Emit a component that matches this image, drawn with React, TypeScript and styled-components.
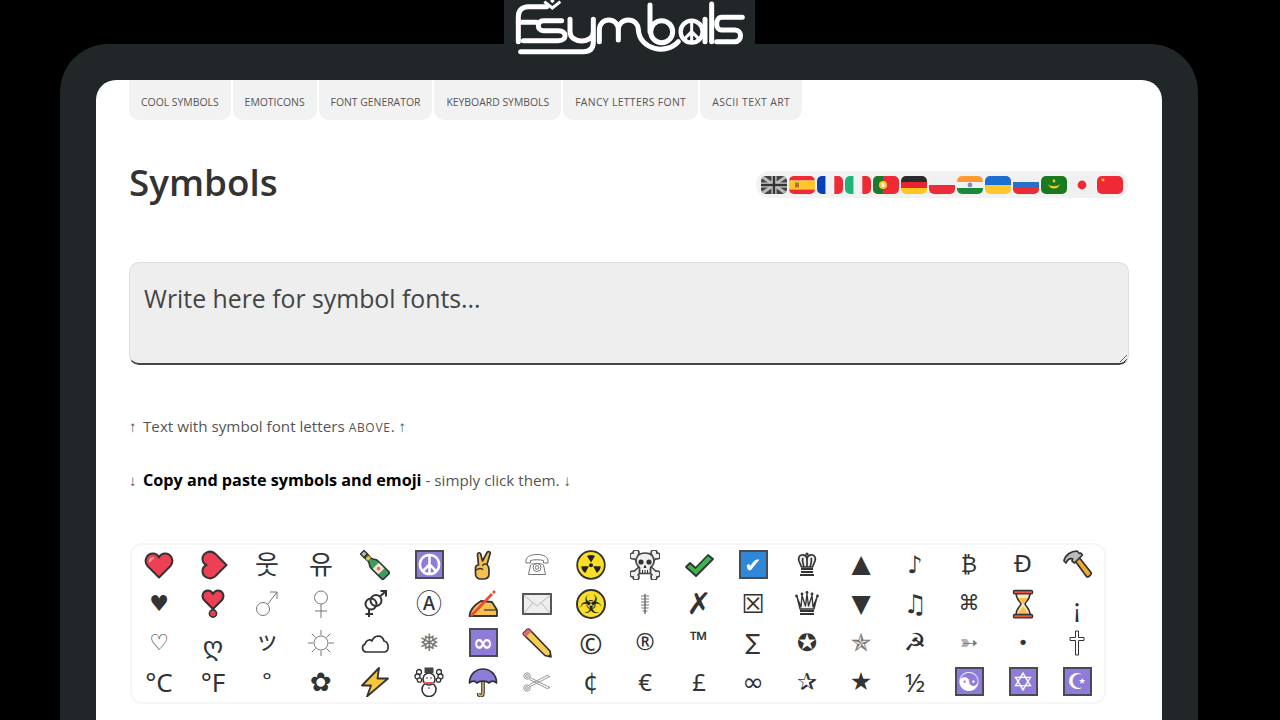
import React from 'react'
import styled, { createGlobalStyle } from 'styled-components'

const GlobalStyle = createGlobalStyle`
  html, body {
    margin: 0;
    height: 720px;
    overflow: hidden;
    background: #000;
  }
  * { box-sizing: border-box; }
`

const Page = styled.div`
  width: 1280px;
  font-family: 'Open Sans', 'Noto Sans', sans-serif;
  color: #444;
`
const Header = styled.header`
  height: 44px;
  display: flex;
  padding-left: 504px;
`
const LogoBox = styled.a`
  position: relative;
  display: block;
  width: 251px;
  height: 44px;
  background: #212628;
`
const LogoSvg = styled.svg`
  position: absolute;
  left: -14px;
  top: 0;
  width: 280px;
  height: 70px;
`
const Frame = styled.div`
  width: 1138px;
  height: 676px;
  margin-left: 60px;
  padding: 36px 36px 0;
  background: #212628;
  border-radius: 48px 48px 0 0;
`
const Card = styled.main`
  height: 640px;
  padding: 0 33px;
  background: #fff;
  border-radius: 20px 20px 0 0;
`
const Nav = styled.nav`
  display: flex;
  gap: 2px;
`
const Tab = styled.a<{ $track?: number }>`
  display: flex;
  align-items: center;
  height: 40px;
  padding: 3px 12px 0;
  background: #f2f2f2;
  border-radius: 0 0 10px 10px;
  font-size: 10.4px;
  letter-spacing: ${p => p.$track || 0}px;
  color: #555;
  text-transform: uppercase;
  white-space: nowrap;
`
const TitleRow = styled.div`
  display: flex;
  align-items: center;
  justify-content: space-between;
  margin-top: 37px;
  height: 52px;
`
const Title = styled.h1`
  margin: -2px 0 0;
  font-size: 36.8px;
  font-weight: 600;
  color: #333;
`
const FlagBar = styled.div`
  display: flex;
  gap: 2px;
  height: 27px;
  align-items: center;
  padding: 0 5px;
  margin: 3px 1px 0 0;
  background: #f2f2f2;
  border-radius: 13px;
`
const FlagSvg = styled.svg`
  display: block;
  width: 26px;
  height: 18px;
  border-radius: 5px;
`
const Input = styled.textarea`
  display: block;
  width: 1000px;
  height: 103px;
  margin-top: 53px;
  padding: 17px 14px;
  background: #eee;
  border: 1px solid #ddd;
  border-bottom: 2px solid #444;
  border-radius: 10px;
  font-family: inherit;
  font-size: 24.8px;
  line-height: 36px;
  outline: none;
  &::placeholder { color: #444; opacity: 1; }
`
const Note = styled.p`
  margin: 0;
  height: 22px;
  font-size: 15.2px;
  line-height: 22px;
  color: #555;
  white-space: nowrap;
  & + & { margin-top: 32px; }
  b { color: #000; font-size: 16.2px; font-weight: 700; }
`
const Notes = styled.div`
  margin-top: 50px;
`
const Arrow = styled.span`
  display: inline-block;
  width: 14px;
`
const Small = styled.span`
  font-variant: small-caps;
  font-size: 1.1em;
  letter-spacing: 0.7px;
`
const Grid = styled.div`
  display: grid;
  grid-template-columns: repeat(18, 54px);
  grid-auto-rows: 39px;
  width: 976px;
  margin-top: 52px;
  margin-left: 1px;
  padding-bottom: 1px;
  border: 2px solid #f6f6f6;
  border-radius: 12px;
`
const Cell = styled.span`
  display: flex;
  align-items: center;
  justify-content: center;
  overflow: hidden;
`
const Glyph = styled.span<{ $size: number; $color?: string; $lift?: number; $font?: string }>`
  display: block;
  font-family: ${p => p.$font || `'DejaVu Sans', 'Noto Sans CJK KR', 'Noto Sans CJK JP', sans-serif`};
  font-size: ${p => p.$size}px;
  line-height: 1;
  color: ${p => p.$color || '#333'};
  transform: translateY(${p => p.$lift || 0}px);
`
const Tile = styled.span<{ $bg?: string; $size?: number }>`
  display: flex;
  align-items: center;
  justify-content: center;
  width: 29px;
  height: 29px;
  background: ${p => p.$bg || '#8e7cd8'};
  border: 2px solid #4a4a55;
  color: #fff;
  font-family: 'DejaVu Sans', sans-serif;
  font-size: ${p => p.$size || 20}px;
  font-weight: 700;
  line-height: 1;
`
const Hazard = styled.span<{ $size: number }>`
  display: flex;
  align-items: center;
  justify-content: center;
  width: 30px;
  height: 30px;
  background: #fbdf27;
  border: 2px solid #333;
  border-radius: 50%;
  color: #222;
  font-family: 'DejaVu Sans', sans-serif;
  font-size: ${p => p.$size}px;
  line-height: 1;
`
const IconSvg = styled.svg`
  display: block;
  width: 30px;
  height: 30px;
`
const PeaceSvg = styled.svg`
  display: block;
  width: 23px;
  height: 23px;
`

const heartPath = 'M15 27.5 L3.5 16 C-0.5 11 2.5 3.5 9 3.5 C12 3.5 14 5.3 15 7.5 C16 5.3 18 3.5 21 3.5 C27.5 3.5 30.5 11 26.5 16 Z'
const ink = '#333'

const Icon = ({ children }: { children: React.ReactNode }) => <IconSvg viewBox='0 0 30 30'>{children}</IconSvg>

const Heart = () => (
  <Icon>
    <path d={heartPath} fill='#ee4054' stroke={ink} strokeWidth='2' strokeLinejoin='round' />
    <path d='M6 12 C6 9 8 8 10 8' fill='none' stroke='#f6a5a0' strokeWidth='2' />
  </Icon>
)
const HeartSide = () => (
  <Icon>
    <g transform='rotate(-90 15 15) translate(0 1)'>
      <path d={heartPath} fill='#ee4054' stroke={ink} strokeWidth='2' strokeLinejoin='round' />
    </g>
  </Icon>
)
const HeartDrop = () => (
  <Icon>
    <path d='M15 20 L6 11 C3 7 5 1.5 10 1.5 C12.5 1.5 14 3 15 5 C16 3 17.5 1.5 20 1.5 C25 1.5 27 7 24 11 Z' fill='#ee4054' stroke={ink} strokeWidth='2' strokeLinejoin='round' />
    <circle cx='15' cy='24.5' r='3.6' fill='#ee4054' stroke={ink} strokeWidth='1.6' />
  </Icon>
)
const Champagne = () => (
  <Icon>
    <g transform='rotate(-45 15 15)'>
      <rect x='12.5' y='-3' width='5' height='5' fill='#bbb' stroke={ink} strokeWidth='1.4' />
      <path d='M12.8 2 H17.2 V8 C17.2 10 20 11 20 14 V31 H10 V14 C10 11 12.8 10 12.8 8 Z' fill='#3e9d5c' stroke={ink} strokeWidth='1.6' strokeLinejoin='round' />
      <rect x='10.8' y='16' width='8.4' height='8' fill='#f5e6d8' />
      <circle cx='15' cy='20' r='1.8' fill='#e66' />
      <rect x='12.8' y='4' width='4.4' height='3' fill='#f0c040' />
    </g>
  </Icon>
)
const Victory = () => (
  <Icon>
    <path d='M10.5 15 L9.5 5 C9.3 2.5 12 2 12.7 4 L14.5 11 L19 2.5 C20.3 0.6 23 2 22 4 L19 14.5 C20.5 16 21 18 21 20 V24 C21 27.5 19 29 15 29 H13 C9.5 29 7.5 27 7.5 24 V18 C7.5 16 9 15 10.5 15 Z' fill='#f5c04d' stroke={ink} strokeWidth='1.7' strokeLinejoin='round' />
    <path d='M8 20 C11 18 14 18 15 20 M19 14.5 C16.5 13.5 15 14 14.5 16' fill='none' stroke={ink} strokeWidth='1.3' />
  </Icon>
)
const Phone = () => (
  <Icon>
    <g fill='none' stroke='#777' strokeWidth='1'>
      <path d='M4 13 C3 7 8 4.5 15 4.5 C22 4.5 27 7 26 13 H21.5 V10.5 C19 9.5 11 9.5 8.5 10.5 V13 Z' />
      <path d='M6.5 24.5 L8.5 15 C9.5 13 20.5 13 21.5 15 L23.5 24.5 Z' />
      <circle cx='15' cy='17.5' r='4' />
      <circle cx='15' cy='17.5' r='1.8' />
    </g>
  </Icon>
)
const Radiation = () => (
  <Icon>
    <circle cx='15' cy='15' r='13.8' fill='#fbdf27' stroke={ink} strokeWidth='1.8' />
    <path d='M15 12.5 L11 6 C13.5 4.8 16.5 4.8 19 6 Z M17.2 16.3 L24.7 16.2 C24.6 19 23 21.5 20.7 23 Z M12.8 16.3 L9.3 23 C7 21.5 5.4 19 5.3 16.2 Z' fill='#222' />
    <circle cx='15' cy='15.2' r='2' fill='#222' />
  </Icon>
)
const boneLines = 'M4.5 5.5 L25.5 24.5 M25.5 5.5 L4.5 24.5'
const boneEnds = [
  [3, 6], [6, 3], [27, 6], [24, 3], [3, 24], [6, 27], [27, 24], [24, 27]
]
const Skull = () => (
  <Icon>
    {boneEnds.map(([cx, cy], i) => <circle key={i} cx={cx} cy={cy} r='3' fill='#efefef' stroke='#444' strokeWidth='1.7' />)}
    <path d={boneLines} stroke='#444' strokeWidth='7' />
    {boneEnds.map(([cx, cy], i) => <circle key={i} cx={cx} cy={cy} r='2.2' fill='#efefef' />)}
    <path d={boneLines} stroke='#efefef' strokeWidth='3.8' />
    <path d='M15 3 C21.5 3 24 7 24 11.5 C24 15 21.5 16 20.5 18 V23.5 H9.5 V18 C8.5 16 6 15 6 11.5 C6 7 8.5 3 15 3 Z' fill='#efefef' stroke='#444' strokeWidth='1.7' strokeLinejoin='round' />
    <circle cx='11' cy='12' r='2.6' fill='#333' />
    <circle cx='19' cy='12' r='2.6' fill='#333' />
    <path d='M14 17.5 L15 15.5 L16 17.5 Z M12.5 20 V23 M15 20 V23 M17.5 20 V23' fill='#333' stroke='#333' strokeWidth='1' />
  </Icon>
)
const Check = () => (
  <Icon>
    <path d='M2 17 L6 13 L11.5 18 L24 5 L29 9 L12 26 Z' fill='#3cb54a' stroke={ink} strokeWidth='1.8' strokeLinejoin='round' />
  </Icon>
)
const King = () => (
  <Icon>
    <path d='M15 8 C13 3 5 4 7 11 L9.5 17 H20.5 L23 11 C25 4 17 3 15 8 Z' fill='#eee' stroke={ink} strokeWidth='1.7' />
    <path d='M15 8 V17 M11 8 C10 10 11 14 12 17 M19 8 C20 10 19 14 18 17' fill='none' stroke={ink} strokeWidth='1.7' />
    <circle cx='15' cy='4' r='1.6' fill={ink} />
    <path d='M9 19 H21 M9 22 H21 M8 25 H22' stroke={ink} strokeWidth='2' />
  </Icon>
)
const Queen = () => (
  <Icon>
    <path d='M5 8 L9 18 L10 6.5 L13.5 17 L15 5 L16.5 17 L20 6.5 L21 18 L25 8 L22 20 H8 Z' fill='#eee' stroke={ink} strokeWidth='1.3' strokeLinejoin='round' />
    <g fill={ink}>
      <circle cx='4.5' cy='7' r='1.4' /><circle cx='10' cy='5' r='1.4' /><circle cx='15' cy='3.5' r='1.4' />
      <circle cx='20' cy='5' r='1.4' /><circle cx='25.5' cy='7' r='1.4' />
    </g>
    <path d='M8 22 H22 M8 25 H22' stroke={ink} strokeWidth='2' />
  </Icon>
)
const Hammer = () => (
  <Icon>
    <path d='M12 9.5 L16 6 L29 22.5 C30 24 26.5 28 24.5 26.5 Z' fill='#eeaa33' stroke={ink} strokeWidth='1.7' strokeLinejoin='round' />
    <path d='M2 11 C3 5 9 1 15 1 L17.5 3.5 L18.8 3 L20.4 5 L12.5 13 L10 11 L10.5 8.8 C8 8.2 5.5 9.5 4 13 Z' fill='#bbb' stroke={ink} strokeWidth='1.7' strokeLinejoin='round' />
  </Icon>
)
const WritingHand = () => (
  <Icon>
    <path d='M1.5 27 C2 20 8 15 13 12 L24 13 L29 21 V27 Z' fill='#f5c04d' stroke={ink} strokeWidth='1.8' strokeLinejoin='round' />
    <path d='M3 27 L24 5 M25 4 L27 2' fill='none' stroke='#e64a3c' strokeWidth='2.6' />
    <path d='M16 21 H28' stroke={ink} strokeWidth='1.2' />
  </Icon>
)
const Envelope = () => (
  <Icon>
    <rect x='1' y='5' width='28' height='20' fill='#eee' stroke='#444' strokeWidth='1.8' />
    <path d='M1.5 6 L15 17 L28.5 6 M2 24.5 L11 13.5 M28 24.5 L19 13.5' fill='none' stroke='#bbb' strokeWidth='1' />
  </Icon>
)
const Pencil = () => (
  <Icon>
    <path d='M1.5 5 L5 1.5 C6 1 7 1 8 2 L28 23 L29 29 L23 27.5 L2 7 C1.3 6.5 1.2 5.6 1.5 5 Z' fill='#f7cc55' stroke={ink} strokeWidth='1.7' strokeLinejoin='round' />
    <path d='M1.5 5 L5 1.5 C6 1 7 1 8 2 L9.5 3.5 L4 8.8 L2 7 C1.3 6.5 1.2 5.6 1.5 5 Z' fill='#d86a70' />
    <path d='M25.5 28.5 L29 29 L28.5 25.5 Z' fill={ink} />
  </Icon>
)
const Hourglass = () => (
  <Icon>
    <path d='M8 4 H22 C22 11 18 12 17 15 C18 18 22 19 22 26 H8 C8 19 12 18 13 15 C12 12 8 11 8 4 Z' fill='#fbe6bd' stroke={ink} strokeWidth='1.6' />
    <path d='M10 26 C10.5 21 14 20 15 17 C16 20 19.5 21 20 26 Z M10.5 9 H19.5 C18.5 12 16.5 13 15 15 C13.5 13 11.5 12 10.5 9 Z' fill='#f5c04d' />
    <rect x='5.5' y='1.5' width='19' height='3.4' rx='1.2' fill='#e2574c' stroke={ink} strokeWidth='1.4' />
    <rect x='5.5' y='25.5' width='19' height='3.4' rx='1.2' fill='#e2574c' stroke={ink} strokeWidth='1.4' />
  </Icon>
)
const Cloud = () => (
  <Icon>
    <path d='M7 24 C2 24 1 18 5 16 C6 12 10 11 12 13 C14 7 22 6 24 13 C29 14 30 24 24 24 Z' fill='#fff' stroke={ink} strokeWidth='1.7' strokeLinejoin='round' />
  </Icon>
)
const Bolt = () => (
  <Icon>
    <path d='M19 1 L2 18.5 L11 18.5 L7 29.5 L28 11.5 L17.5 11.5 Z' fill='#f8c83c' stroke={ink} strokeWidth='1.8' strokeLinejoin='round' />
  </Icon>
)
const Snowman = () => (
  <Icon>
    <circle cx='15' cy='22.5' r='7' fill='#fff' stroke={ink} strokeWidth='1.6' />
    <circle cx='15' cy='12' r='6' fill='#fff' stroke={ink} strokeWidth='1.6' />
    <path d='M10.5 0.5 H19.5 V6 H10.5 Z' fill='#444' />
    <g fill='#fff' stroke={ink} strokeWidth='1.3'>
      <circle cx='5' cy='5' r='2.5' /><circle cx='3.5' cy='9.5' r='2.5' /><circle cx='5.5' cy='13' r='2.2' />
      <circle cx='25' cy='5' r='2.5' /><circle cx='26.5' cy='9.5' r='2.5' /><circle cx='24.5' cy='13' r='2.2' />
    </g>
    <path d='M10 16 H20' stroke='#e2574c' strokeWidth='2' />
    <circle cx='15' cy='21' r='1' fill='#e2574c' />
    <circle cx='13' cy='11' r='0.8' fill='#333' /><circle cx='17' cy='11' r='0.8' fill='#333' />
  </Icon>
)
const Umbrella = () => (
  <Icon>
    <path d='M15 8 V26 C15 29.5 10.5 29.5 10.5 26' fill='none' stroke={ink} strokeWidth='3.6' />
    <path d='M15 8 V26 C15 29.5 10.5 29.5 10.5 26' fill='none' stroke='#d9b36a' strokeWidth='1.6' />
    <path d='M1.5 16 C1.5 7 8 2 15 2 C22 2 28.5 7 28.5 16 C26 13.5 23 13.5 21 16 C19 13.5 11 13.5 9 16 C7 13.5 4 13.5 1.5 16 Z' fill='#8e7cd8' stroke={ink} strokeWidth='1.7' strokeLinejoin='round' />
  </Icon>
)
const Scissors = () => (
  <Icon>
    <g fill='none' stroke='#999' strokeWidth='1'>
      <circle cx='5' cy='9' r='3.2' /><circle cx='5' cy='21' r='3.2' />
      <circle cx='5' cy='9' r='1.4' /><circle cx='5' cy='21' r='1.4' />
      <path d='M8 10.5 L28 20.5 L25 21.5 L7.5 12.5 M8 19.5 L28 9.5 L25 8.5 L7.5 17.5' />
    </g>
  </Icon>
)
const Male = () => (
  <Icon>
    <g fill='none' stroke='#777' strokeWidth='1'>
      <circle cx='11' cy='20' r='6.5' />
      <path d='M15.5 15.5 L25 3 M18 3 H25 V10' />
    </g>
  </Icon>
)
const Female = () => (
  <Icon>
    <g fill='none' stroke='#777' strokeWidth='1'>
      <circle cx='15' cy='8.5' r='6.5' />
      <path d='M15 15 V29 M9 22 H21' />
    </g>
  </Icon>
)
const Intertwined = () => (
  <Icon>
    <g fill='none' stroke={ink} strokeWidth='2'>
      <circle cx='11' cy='15' r='5.5' />
      <circle cx='16' cy='11.5' r='5.5' />
      <path d='M20 7.5 L25.5 2.5 M20.5 2 H26 V7.5' />
      <path d='M9 20.5 V28 M5.5 25 H13' />
    </g>
  </Icon>
)
const Sun = () => (
  <Icon>
    <g fill='none' stroke='#777' strokeWidth='1'>
      <circle cx='15' cy='15' r='7' />
      <path d='M15 2 V7 M15 23 V28 M2 15 H7 M23 15 H28 M5.8 5.8 L9.5 9.5 M20.5 20.5 L24.2 24.2 M5.8 24.2 L9.5 20.5 M20.5 9.5 L24.2 5.8' />
    </g>
  </Icon>
)
const Ribbed = () => (
  <Icon>
    <g fill='none' stroke='#777' strokeWidth='1'>
      <path d='M15 5 V25' strokeWidth='1.6' />
      <path d='M11 7 H19 M11 10 H19 M11 13 H19 M11 16 H19 M11.5 19 H18.5 M12.5 22 H17.5' />
    </g>
  </Icon>
)
const Cross = () => (
  <Icon>
    <path d='M13.5 3 H16.5 V9.5 H22 V12.5 H16.5 V27 H13.5 V12.5 H8 V9.5 H13.5 Z' fill='#fff' stroke={ink} strokeWidth='1' />
  </Icon>
)
const PeaceMark = () => (
  <PeaceSvg viewBox='0 0 24 24'>
    <g fill='none' stroke='#fff' strokeWidth='2.6'>
      <circle cx='12' cy='12' r='10' />
      <path d='M12 2 V22 M12 12 L5 19 M12 12 L19 19' />
    </g>
  </PeaceSvg>
)

const Flag = ({ children }: { children: React.ReactNode }) => <FlagSvg viewBox='0 0 26 18'>{children}</FlagSvg>
const Bars = ({ colors }: { colors: string[] }) => (
  <>
    {colors.map((c, i) => (
      <rect key={i} x='0' y={(18 / colors.length) * i} width='26' height={18 / colors.length} fill={c} />
    ))}
  </>
)
const Cols = ({ colors }: { colors: string[] }) => (
  <>
    {colors.map((c, i) => (
      <rect key={i} x={(26 / colors.length) * i} y='0' width={26 / colors.length} height='18' fill={c} />
    ))}
  </>
)

const flags = [
  <Flag key='uk'>
    <rect width='26' height='18' fill='#444' />
    <path d='M0 0 L26 18 M26 0 L0 18' stroke='#bbb' strokeWidth='3' />
    <path d='M13 0 V18 M0 9 H26' stroke='#ccc' strokeWidth='5' />
    <path d='M13 0 V18 M0 9 H26' stroke='#333' strokeWidth='2.5' />
  </Flag>,
  <Flag key='es'>
    <Bars colors={['#ee2a35', '#ffc72c', '#ffc72c', '#ee2a35']} />
    <rect x='6' y='6.5' width='4' height='5' fill='#b5732a' />
  </Flag>,
  <Flag key='fr'><Cols colors={['#0a3fb5', '#f2f2f2', '#ee2a35']} /></Flag>,
  <Flag key='it'><Cols colors={['#1fb57a', '#f2f2f2', '#ee2a35']} /></Flag>,
  <Flag key='pt'>
    <rect width='26' height='18' fill='#ee2a35' />
    <rect width='10' height='18' fill='#1a7a2e' />
    <circle cx='10' cy='9' r='4' fill='#ffc72c' />
    <rect x='8.5' y='7' width='3' height='4' fill='#f2f2f2' />
  </Flag>,
  <Flag key='de'><Bars colors={['#2a2a2e', '#e8252e', '#ffc61e']} /></Flag>,
  <Flag key='pl'><Bars colors={['#f0f0f0', '#ef2b3a']} /></Flag>,
  <Flag key='in'>
    <Bars colors={['#ff9933', '#f2f2f2', '#1a8a3a']} />
    <circle cx='13' cy='9' r='2.4' fill='#8a8ac0' />
  </Flag>,
  <Flag key='ua'><Bars colors={['#1b6fd0', '#ffc72c']} /></Flag>,
  <Flag key='ru'><Bars colors={['#f0f0f0', '#2a70c8', '#ee2a35']} /></Flag>,
  <Flag key='mr'>
    <rect width='26' height='18' fill='#1a7a1e' />
    <path d='M7 8 C9 14 17 14 19 8 C17 11 9 11 7 8 Z' fill='#ffc72c' />
    <path d='M13 3 L14 6 L12 6 Z M11.5 4.8 H14.5' fill='#ffc72c' stroke='#ffc72c' strokeWidth='0.6' />
  </Flag>,
  <Flag key='jp'>
    <rect width='26' height='18' fill='#f0f0f0' />
    <circle cx='13' cy='9' r='4.4' fill='#ee2a35' />
  </Flag>,
  <Flag key='cn'>
    <rect width='26' height='18' fill='#ee2a35' />
    <path d='M6 1.5 L7.4 5.8 L3.7 3.2 H8.3 L4.6 5.8 Z' fill='#ffc72c' />
  </Flag>
]

const sansFont = `'Noto Sans', 'Open Sans', sans-serif`
const g = (ch: string, size: number, color?: string, lift?: number) => (
  <Glyph $size={size} $color={color} $lift={lift}>{ch}</Glyph>
)
const s = (ch: string, size: number, lift?: number) => (
  <Glyph $size={size} $lift={lift} $font={sansFont}>{ch}</Glyph>
)
const thin = '#777'

const symbols: React.ReactNode[] = [
  <Heart />, <HeartSide />, g('웃', 26), g('유', 26), <Champagne />, <Tile><PeaceMark /></Tile>, <Victory />, <Phone />,
  <Radiation />, <Skull />, <Check />, <Tile $bg='#2f87d8' $size={20}>✔</Tile>, <King />, g('▲', 25, '#333', -1), g('♪', 24), g('₿', 22), g('Đ', 23), <Hammer />,

  g('♥', 22, '#333'), <HeartDrop />, <Male />, <Female />, <Intertwined />, g('Ⓐ', 26), <WritingHand />, <Envelope />,
  <Hazard $size={26}>☣</Hazard>, <Ribbed />, g('✗', 30), g('☒', 26), <Queen />, g('▼', 25), g('♫', 26), g('⌘', 21), <Hourglass />, s('¡', 26, 3),

  g('♡', 22, '#222'), g('ღ', 26, '#333', 3), g('ッ', 24, '#333', -2), <Sun />, <Cloud />, g('❅', 24, thin), <Tile $size={24}>∞</Tile>, <Pencil />,
  s('©', 28), s('®', 23, -1), s('™', 23, -3), g('∑', 22), g('✪', 24), g('✯', 25, thin), g('☭', 25), g('➳', 22, thin), g('•', 18), <Cross />,

  s('°C', 26), s('°F', 26), s('°', 22, -3), g('✿', 26), <Bolt />, <Snowman />, <Umbrella />, <Scissors />,
  g('¢', 24), s('€', 24), s('£', 24), g('∞', 26), g('✰', 24), g('★', 25), s('½', 26), <Tile $size={26}>☯</Tile>, <Tile $size={26}>✡</Tile>, <Tile $size={22}>☪</Tile>
]

const tabs: { label: string; track?: number }[] = [
  { label: 'Cool Symbols' },
  { label: 'Emoticons' },
  { label: 'Font Generator' },
  { label: 'Keyboard Symbols' },
  { label: 'Fancy Letters Font', track: 0.33 },
  { label: 'ASCII Text Art', track: 0.44 }
]

const Logo = () => (
  <LogoSvg viewBox='0 0 840 210'>
    <g fill='none' stroke='#fff' strokeWidth='15' strokeLinecap='round' strokeLinejoin='round'>
      <path d='M170 20 H115 C95 20 85 32 85 50 V125' />
      <path d='M85 67 H140' />
      <path d='M215 62 H160 C140 62 140 92 160 92 H205 C232 92 232 122 205 122 H100' />
      <path d='M240 58 V95 C240 132 310 132 310 95 V58 M310 95 V125 C310 145 300 155 280 155 H92' />
      <path d='M328 125 V90 C328 50 385 50 385 90 V120 M385 90 C385 50 445 50 445 90 C450 150 530 165 565 125' />
      <path d='M480 15 V95' />
      <circle cx='515' cy='95' r='33' />
      <path d='M645 58 V125' />
      <path d='M665 12 V125' />
      <path d='M757 52 H695 C675 52 675 90 695 90 H735 C757 90 757 125 735 125 H680' />
    </g>
    <path d='M163 5 L187 24 L211 5' fill='none' stroke='#fff' strokeWidth='9' />
    <path d='M180 3 L187 -4 L194 3 L187 10 Z' fill='#fff' />
    <g fill='none' stroke='#fff'>
      <circle cx='605' cy='95' r='33' strokeWidth='13' />
      <path d='M605 62 V128 M605 95 L582 118 M605 95 L628 118' strokeWidth='9' />
    </g>
  </LogoSvg>
)

export default function App() {
  return (
    <Page>
      <GlobalStyle />
      <Header>
        <LogoBox><Logo /></LogoBox>
      </Header>
      <Frame>
        <Card>
          <Nav>
            {tabs.map(t => <Tab key={t.label} $track={t.track}>{t.label}</Tab>)}
          </Nav>
          <TitleRow>
            <Title>Symbols</Title>
            <FlagBar>{flags}</FlagBar>
          </TitleRow>
          <Input placeholder='Write here for symbol fonts...' />
          <Notes>
            <Note><Arrow>↑</Arrow>Text with symbol font letters <Small>above</Small>. ↑</Note>
            <Note><Arrow>↓</Arrow><b>Copy and paste symbols and emoji</b> - simply click them. ↓</Note>
          </Notes>
          <Grid>
            {symbols.map((item, i) => <Cell key={i}>{item}</Cell>)}
          </Grid>
        </Card>
      </Frame>
    </Page>
  )
}
